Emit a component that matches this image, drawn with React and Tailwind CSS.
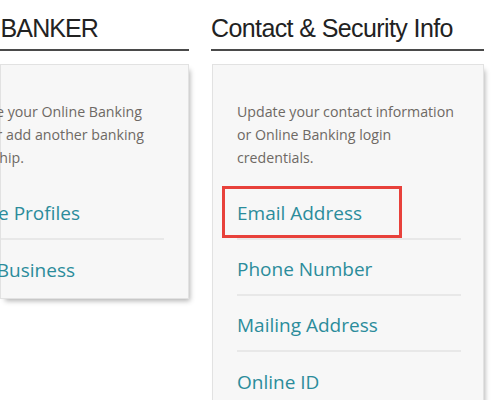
import React from "react";

const LINK = "text-[19px] text-[#2b8c9b] leading-[26px] whitespace-nowrap";
const BODY = "text-[14.2px] text-[#6e6964] leading-[23px]";

const Heading = ({ children, clipTo }) => (
  <div className="pt-[13px] pb-[6px] border-b-2 border-[#4a4a4a]">
    <div
      className={
        clipTo
          ? "flex justify-end whitespace-nowrap text-[25px] leading-[30px] tracking-[-0.6px] text-[#222] font-['Liberation_Sans',Arial,sans-serif] " +
            clipTo
          : "whitespace-nowrap text-[25px] leading-[30px] tracking-[-0.6px] text-[#222] font-['Liberation_Sans',Arial,sans-serif]"
      }
    >
      {children}
    </div>
  </div>
);

const securityLinks = ["Email Address", "Phone Number", "Mailing Address", "Online ID"];

export default function App() {
  return (
    <div className="h-[400px] w-[500px] overflow-hidden bg-white font-['Open_Sans',sans-serif]">
      <div className="flex gap-[22px]">
        {/* left column, cut off by the left edge of the shot */}
        <div className="w-[189px] shrink-0">
          <Heading clipTo="w-[98px] tracking-[-0.9px]">MY BANKER</Heading>
          <div className="mt-[13px] bg-[#f7f7f7] border border-[#e2e2e2] pt-[35px] pb-[2px] shadow-[3px_4px_5px_-2px_rgba(0,0,0,0.3)]">
            <div className={BODY}>
              <div className="flex justify-end whitespace-nowrap w-[141px]">Update your Online Banking</div>
              <div className="flex justify-end whitespace-nowrap w-[143px]">profiles or add another banking</div>
              <div className="flex justify-end whitespace-nowrap w-[23px]">relationship.</div>
            </div>
            <div className="mt-[15px] pr-6">
              <div className="h-[56px] pt-1 flex items-center border-b-2 border-[#e8e8e8]">
                <span className={"flex justify-end w-[79px] " + LINK}>Manage Profiles</span>
              </div>
              <div className="h-[56px] pt-1 flex items-center">
                <span className={"flex justify-end w-[74px] " + LINK}>Add Business</span>
              </div>
            </div>
          </div>
        </div>

        {/* right column */}
        <div className="w-[273px] shrink-0">
          <Heading>Contact &amp; Security Info</Heading>
          <div className="mt-[13px] ml-px bg-[#f7f7f7] border border-[#e2e2e2] pt-[35px] pl-6 pr-[22px] pb-4 shadow-[3px_4px_5px_-2px_rgba(0,0,0,0.3)]">
            <p className={BODY}>
              Update your contact information or Online Banking login credentials.
            </p>
            <div className="mt-[15px]">
              {securityLinks.map((label, i) => (
                <div
                  key={label}
                  className={
                    i < securityLinks.length - 1
                      ? "relative h-[56px] pt-1 flex items-center border-b-2 border-[#e8e8e8]"
                      : "relative h-[56px] pt-1 flex items-center"
                  }
                >
                  <span className={LINK}>{label}</span>
                  {i === 0 && (
                    <span className="absolute left-[-15px] top-[2px] w-[180px] h-[52px] border-[3px] border-[#e8413b]" />
                  )}
                </div>
              ))}
            </div>
          </div>
        </div>
      </div>
    </div>
  );
}
